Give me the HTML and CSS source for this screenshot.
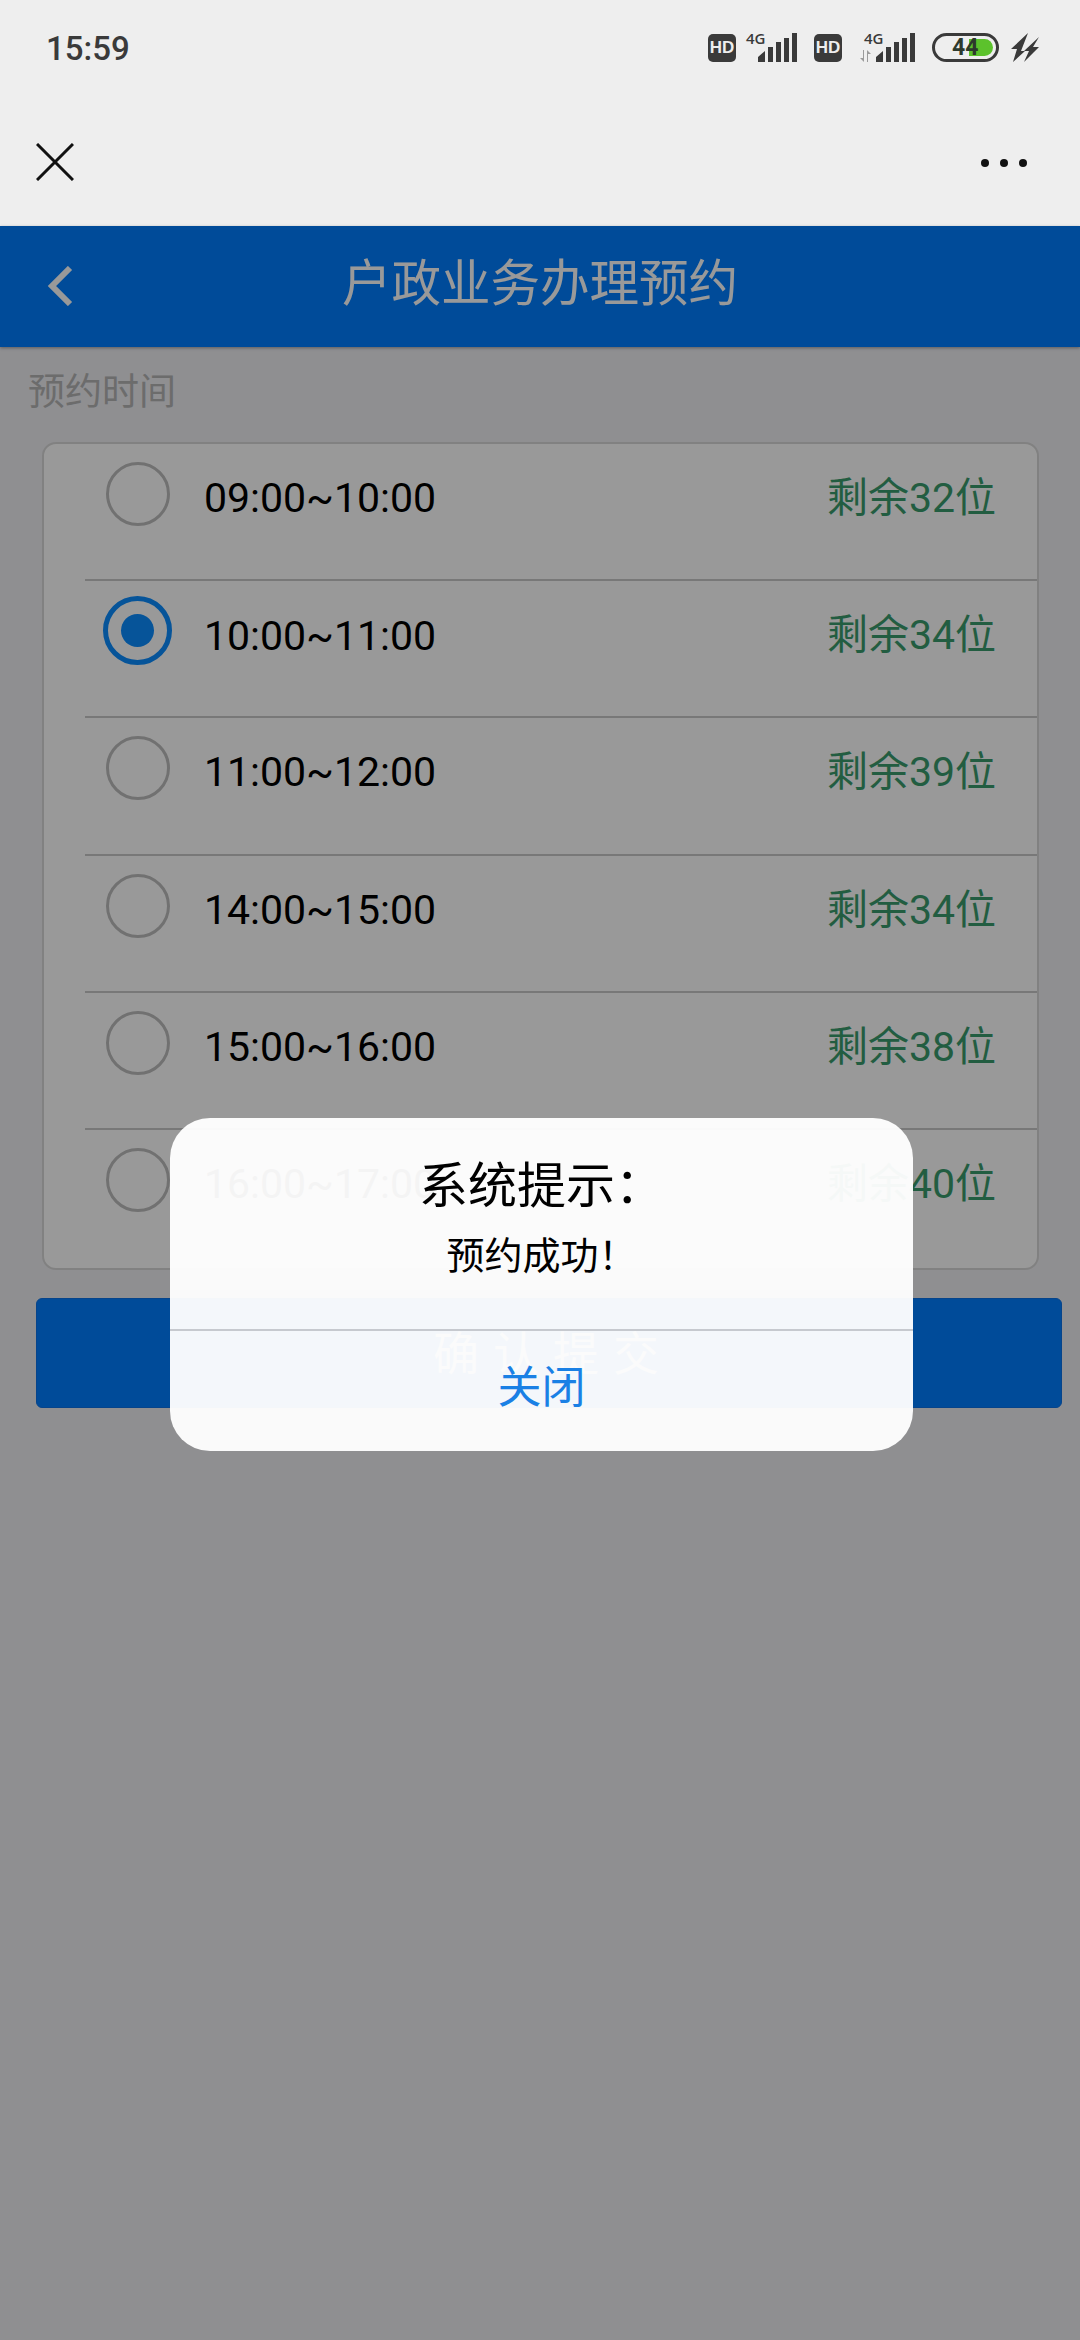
FILE: index.html
```html
<!DOCTYPE html>
<html lang="zh">
<head>
<meta charset="utf-8">
<title>户政业务办理预约</title>
<link rel="stylesheet" href="styles.css">
</head>
<body>
<div class="screen">
  <div class="status">
    <span class="time">15:59</span>
    <div class="sys">
      <span class="hd">HD</span>
      <span class="net">
        <span class="g4">4G</span>
        <svg class="bars" viewBox="0 0 40 29"><path d="M0 29V24L7 18V29ZM10 29V14H15V29ZM18 29V9H23V29ZM26 29V5H31V29ZM34 29V0H39V29Z"/></svg>
      </span>
      <span class="hd hd2">HD</span>
      <span class="net net2">
        <span class="g4">4G</span>
        <svg class="arrows" viewBox="0 0 14 12"><path d="M4 0V8H1L5 12V0ZM9 12V4H12L8 0V12Z"/></svg>
        <svg class="bars" viewBox="0 0 40 29"><path d="M0 29V24L7 18V29ZM10 29V14H15V29ZM18 29V9H23V29ZM26 29V5H31V29ZM34 29V0H39V29Z"/></svg>
      </span>
      <span class="batt"><span class="fill"></span><span class="pct">44</span></span>
      <svg class="bolt" viewBox="0 0 28 29"><path d="M17 0L0 16H6L2 29L14 18H10ZM28 4L13 18H18L13 29L28 14H22Z"/></svg>
    </div>
  </div>
  <div class="toolbar">
    <svg class="close" viewBox="0 0 38 38"><path d="M1 1L37 37M37 1L1 37"/></svg>
    <div class="dots"><i></i><i></i><i></i></div>
  </div>
  <div class="web">
    <header class="head">
      <svg class="chev" viewBox="0 0 26 40"><path d="M23 2L5 20L23 38"/></svg>
      <h1>户政业务办理预约</h1>
    </header>
    <div class="label">预约时间</div>
    <div class="card">
      <div class="row"><span class="radio"></span><span class="slot">09:00~10:00</span><span class="left">剩余32位</span></div>
      <div class="row"><span class="radio on"></span><span class="slot">10:00~11:00</span><span class="left">剩余34位</span></div>
      <div class="row"><span class="radio"></span><span class="slot">11:00~12:00</span><span class="left">剩余39位</span></div>
      <div class="row"><span class="radio"></span><span class="slot">14:00~15:00</span><span class="left">剩余34位</span></div>
      <div class="row"><span class="radio"></span><span class="slot">15:00~16:00</span><span class="left">剩余38位</span></div>
      <div class="row last"><span class="radio"></span><span class="slot">16:00~17:00</span><span class="left">剩余40位</span></div>
    </div>
    <button class="submit">确认提交</button>
    <div class="scrim"></div>
    <div class="dialog">
      <div class="msg">
        <div class="d-title">系统提示：</div>
        <div class="d-text">预约成功！</div>
      </div>
      <div class="d-btn">关闭</div>
    </div>
  </div>
</div>
</body>
</html>
```
FILE: styles.css
```css
* { box-sizing: border-box; }
html, body { margin: 0; padding: 0; }
body { width: 1080px; height: 2340px; overflow: hidden; font-family: Roboto, "Noto Sans CJK SC", sans-serif; background: #eeeeee; }
.screen { width: 1080px; height: 2340px; display: flex; flex-direction: column; }

.status { height: 98px; background: #eeeeee; display: flex; justify-content: space-between; padding: 33px 41px 0 46px; flex: none; }
.time { font-family: Roboto, sans-serif; font-size: 33px; font-weight: 500; line-height: 32px; color: #3a3a3a; }
.sys { display: flex; height: 30px; align-items: flex-start; color: #3a3a3a; }
.hd { width: 28px; height: 28px; margin-top: 1px; border-radius: 5px; background: #3a3a3a; color: #eee; font: 700 17px/28px "Liberation Sans", sans-serif; text-align: center; }
.hd2 { margin-left: 16px; }
.net { position: relative; width: 40px; height: 29px; margin-left: 22px; }
.net2 { margin-left: 34px; }
.g4 { position: absolute; left: -12px; top: -3px; font: 600 15px/16px "Open Sans", sans-serif; color: #3a3a3a; }
.bars { display: block; width: 40px; height: 29px; fill: #3a3a3a; }
.arrows { position: absolute; left: -17px; top: 17px; width: 14px; height: 12px; fill: #9a9a9a; }
.batt { position: relative; width: 67px; height: 29px; margin-left: 16px; border: 3px solid #3a3a3a; border-radius: 15px; }
.fill { position: absolute; left: 34px; top: 3px; bottom: 3px; right: 3px; background: #5cc22c; border-radius: 0 10px 10px 0; }
.pct { position: absolute; left: 17px; top: 0; font: 700 23px/23px Roboto, sans-serif; color: #2d3a2d; }
.bolt { width: 28px; height: 29px; margin-left: 12px; fill: #3a3a3a; }

.toolbar { height: 128px; background: #eeeeee; display: flex; justify-content: space-between; align-items: flex-start; padding: 45px 53px 0 36px; flex: none; }
.close { width: 38px; height: 38px; fill: none; stroke: #111; stroke-width: 3; }
.dots { display: flex; gap: 11px; margin-top: 16px; }
.dots i { width: 8px; height: 8px; background: #111; border-radius: 50%; }

.web { position: relative; flex: 1; background: #eeeef2; display: flex; flex-direction: column; }
.head { height: 121px; background: #007dff; color: #fff; display: flex; align-items: flex-start; justify-content: center; position: relative; box-shadow: 0 1px 3px rgba(0,0,0,.35); flex: none; }
.head h1 { margin: 0; font-size: 49.5px; font-weight: 400; line-height: 60px; padding-top: 28px; }
.chev { position: absolute; left: 47px; top: 40px; width: 26px; height: 40px; fill: none; stroke: #fff; stroke-width: 6; }
.label { font-size: 37px; line-height: 50px; color: #b4b4b4; padding: 21px 0 0 28px; height: 95px; flex: none; }
.card { margin: 0 41px 0 42px; height: 828px; background: #fff; border: 2px solid #d8d8d8; border-radius: 14px; flex: none; overflow: hidden; display: flex; flex-direction: column; }
.row { height: 137.2px; margin-left: 41px; border-bottom: 2px solid #c8c8c8; display: flex; align-items: flex-start; padding: 0 41px 0 0; flex: none; }
.row.last { border-bottom: 0; height: 140px; }
.radio { width: 64px; height: 64px; border: 3px solid #bdbdbd; border-radius: 50%; margin: 18px 0 0 21px; flex: none; position: relative; }
.radio.on { width: 69px; height: 69px; border: 5px solid #0a8cff; margin: 15px -2px 0 18px; }
.radio.on::after { content: ""; position: absolute; left: 13px; top: 13px; width: 33px; height: 33px; background: #0a8cff; border-radius: 50%; }
.slot { font-size: 41px; line-height: 56px; color: #000; margin: 26px 0 0 34px; font-family: Roboto, sans-serif; }
.radio.on + .slot { margin-top: 27px; }
.left { margin: 26px 0 0 auto; font-size: 41px; line-height: 56px; color: #3a9c6d; }
.submit { display: block; width: 1026px; height: 110px; margin: 28px 0 0 36px; padding: 0 0 6px 8px; background: #007dff; color: #fff; border: 1px solid #0a72e8; border-radius: 6px; font: 400 46px/1 "Noto Sans CJK SC", sans-serif; letter-spacing: 14px; flex: none; }

.scrim { position: absolute; inset: 0; background: rgba(0,0,0,.4); }
.dialog { position: absolute; left: 170px; top: 892px; width: 743px; height: 333px; background: rgba(255,255,255,.955); border-radius: 40px; display: flex; flex-direction: column; text-align: center; color: #000; }
.msg { height: 213px; border-bottom: 2px solid #c6c9cf; padding-top: 35px; }
.d-title { font-size: 49px; line-height: 68px; }
.d-text { font-size: 38px; line-height: 52px; margin-top: 9px; }
.d-btn { flex: 1; font-size: 44px; line-height: 60px; padding-top: 27px; color: #1a80e5; }
```
